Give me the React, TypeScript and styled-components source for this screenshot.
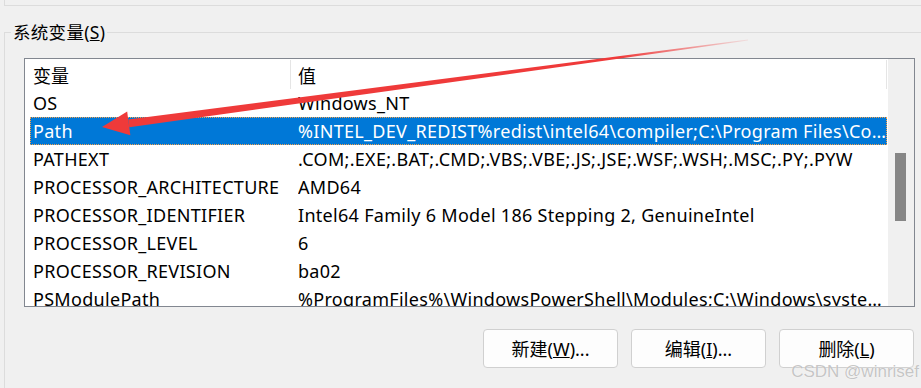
import styled, { createGlobalStyle } from "styled-components";

const GlobalStyle = createGlobalStyle`
	html, body {
		margin: 0;
		padding: 0;
		background: #f0f0f0;
		overflow: hidden;
	}
	body {
		font-family: "Noto Sans", "Noto Sans CJK SC", sans-serif;
		color: #000;
	}
`;

const Screen = styled.div`
	position: relative;
	width: 921px;
	height: 388px;
	overflow: hidden;
	background: #f0f0f0;
`;

const PrevGroupEdge = styled.div`
	height: 5px;
	margin-left: 4px;
	border-left: 1px solid #dcdcdc;
	border-bottom: 1px solid #dcdcdc;
`;

const GroupBox = styled.fieldset`
	margin: 16px 0 0 4px;
	padding: 16px 19px 60px 19px;
	width: 931px;
	min-width: 0;
	box-sizing: border-box;
	border: 1px solid #dcdcdc;
`;

const Legend = styled.legend`
	font-size: 17.5px;
	line-height: 20px;
	padding: 0 2px;
	margin-left: -13px;
	letter-spacing: 0.3px;
`;

const ListBox = styled.div`
	display: grid;
	grid-template-columns: 863px 1fr;
	height: 249px;
	box-sizing: border-box;
	border: 1px solid #828790;
	background: #fff;
	overflow: hidden;
`;

const Table = styled.div`
	display: flex;
	flex-direction: column;
	overflow: hidden;
	font-size: 18px;
	letter-spacing: 0.3px;
`;

const Header = styled.div`
	display: grid;
	grid-template-columns: 266px 596px;
	height: 30px;
	flex-shrink: 0;
`;

const HeaderCell = styled.div<{ $pad: number }>`
	display: flex;
	align-items: center;
	padding-left: ${(p) => p.$pad}px;
	border-right: 1px solid #e5e5e5;
	margin-top: 1px;
	letter-spacing: 0;
`;

const Row = styled.div<{ $selected?: boolean }>`
	display: grid;
	grid-template-columns: 265px 1fr;
	align-items: center;
	flex-shrink: 0;
	height: 28px;
	margin-left: 5px;
	width: 857px;
	box-sizing: border-box;
	padding-left: 3px;
	background: ${(p) => (p.$selected ? "#0078d7" : "transparent")};
	color: ${(p) => (p.$selected ? "#fff" : "#000")};
	outline: ${(p) => (p.$selected ? "1px dotted #f3a14c" : "none")};
	outline-offset: -1px;
`;

const Cell = styled.div`
	white-space: nowrap;
	overflow: hidden;
	text-overflow: ellipsis;
`;

const ScrollTrack = styled.div`
	background: #f0f0f0;
	padding: 94px 0 0 7px;
`;

const ScrollThumb = styled.div`
	width: 11px;
	height: 68px;
	background: #868686;
`;

const ButtonRow = styled.div`
	display: flex;
	justify-content: flex-end;
	gap: 13px;
	margin-top: 22px;
	padding-right: 1px;
`;

const Button = styled.button`
	width: 135px;
	height: 39px;
	box-sizing: border-box;
	border: 1px solid #d0d0d0;
	border-radius: 4px;
	background: #fdfdfd;
	font-family: "Noto Sans", "Noto Sans CJK SC", sans-serif;
	font-size: 18px;
	color: #000;
	padding: 0 0 2px;
`;

const Watermark = styled.div`
	position: absolute;
	right: 2px;
	bottom: 6px;
	font-family: "Liberation Sans", Arial, sans-serif;
	font-size: 17px;
	color: rgba(150, 150, 150, 0.55);
	text-shadow: 0 0 1px #fff;
	pointer-events: none;
`;

const ArrowLayer = styled.svg`
	position: absolute;
	left: 0;
	top: 0;
	pointer-events: none;
`;

const variables = [
	["OS", "Windows_NT"],
	["Path", "%INTEL_DEV_REDIST%redist\\intel64\\compiler;C:\\Program Files\\Common Files\\Oracle\\Java\\javapath"],
	["PATHEXT", ".COM;.EXE;.BAT;.CMD;.VBS;.VBE;.JS;.JSE;.WSF;.WSH;.MSC;.PY;.PYW"],
	["PROCESSOR_ARCHITECTURE", "AMD64"],
	["PROCESSOR_IDENTIFIER", "Intel64 Family 6 Model 186 Stepping 2, GenuineIntel"],
	["PROCESSOR_LEVEL", "6"],
	["PROCESSOR_REVISION", "ba02"],
	["PSModulePath", "%ProgramFiles%\\WindowsPowerShell\\Modules;C:\\Windows\\system32\\WindowsPowerShell\\v1.0\\Modules"],
];

const Arrow = () => {
	// tail top-right, tip pointing at the Path row
	const tip = [102, 127];
	const tail = [748, 40];
	const dx = tail[0] - tip[0];
	const dy = tail[1] - tip[1];
	const len = Math.hypot(dx, dy);
	const u = [dx / len, dy / len];
	const n = [-u[1], u[0]];
	const base = [tip[0] + u[0] * 27, tip[1] + u[1] * 27];
	const pt = (p: number[], k: number) => `${p[0] + n[0] * k},${p[1] + n[1] * k}`;
	return (
		<ArrowLayer width="921" height="388" viewBox="0 0 921 388">
			<defs>
				<linearGradient id="fade" gradientUnits="userSpaceOnUse" x1={tip[0]} y1={tip[1]} x2={tail[0]} y2={tail[1]}>
					<stop offset="0" stopColor="#ef3a3a" />
					<stop offset="0.8" stopColor="#ef3a3a" />
					<stop offset="1" stopColor="#ef3a3a" stopOpacity="0.1" />
				</linearGradient>
			</defs>
			<polygon
				points={`${pt(base, 4)} ${pt(tail, 0.6)} ${pt(tail, -0.6)} ${pt(base, -4)}`}
				fill="url(#fade)"
			/>
			<polygon points={`${tip[0]},${tip[1]} ${pt(base, 12)} ${pt(base, -12)}`} fill="#ef3a3a" />
		</ArrowLayer>
	);
};

const App = () => {
	return (
		<Screen>
			<GlobalStyle />
			<PrevGroupEdge />
			<GroupBox>
				<Legend>
					系统变量(<u>S</u>)
				</Legend>
				<ListBox>
					<Table>
						<Header>
							<HeaderCell $pad={8}>变量</HeaderCell>
							<HeaderCell $pad={7}>值</HeaderCell>
						</Header>
						{variables.map(([name, value]) => (
							<Row key={name} $selected={name === "Path"}>
								<Cell>{name}</Cell>
								<Cell>{value}</Cell>
							</Row>
						))}
					</Table>
					<ScrollTrack>
						<ScrollThumb />
					</ScrollTrack>
				</ListBox>
				<ButtonRow>
					<Button>
						新建(<u>W</u>)...
					</Button>
					<Button>
						编辑(<u>I</u>)...
					</Button>
					<Button>
						删除(<u>L</u>)
					</Button>
				</ButtonRow>
			</GroupBox>
			<Arrow />
			<Watermark>CSDN @winrisef</Watermark>
		</Screen>
	);
};

export default App;
